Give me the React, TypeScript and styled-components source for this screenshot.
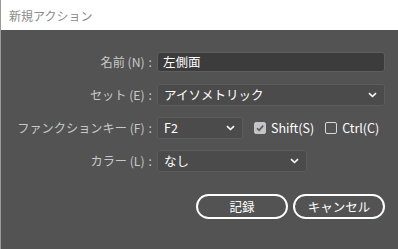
import React from 'react';
import styled, { createGlobalStyle } from 'styled-components';

const GlobalStyle = createGlobalStyle`
  html, body {
    margin: 0;
    padding: 0;
    background: #535353;
  }
  body {
    font-family: "Noto Sans CJK JP", "Noto Sans", sans-serif;
  }
`;

const Dialog = styled.div`
  width: 398px;
  height: 249px;
  box-sizing: border-box;
  border-left: 1px solid #9a9a9a;
  display: flex;
  flex-direction: column;
  background: #535353;
  overflow: hidden;
`;

const TitleBar = styled.div`
  height: 30px;
  flex: none;
  background: #ffffff;
  color: #8a8a8a;
  font-size: 12px;
  display: flex;
  align-items: center;
  padding-left: 8px;
`;

const Form = styled.div`
  display: grid;
  grid-template-columns: 151px 1fr;
  grid-auto-rows: 33px;
  column-gap: 5px;
  padding: 15px 13px 0 0;
  align-items: center;
`;

const Label = styled.label`
  color: #c9c9c9;
  font-size: 12.2px;
  text-align: right;
  white-space: nowrap;
`;

const Colon = styled.span`
  margin-left: 4px;
`;

const Field = styled.div`
  display: flex;
  align-items: center;
  gap: 11px;
`;

const TextInput = styled.div`
  height: 20px;
  flex: 1;
  box-sizing: border-box;
  background: #3c3c3c;
  border: 1px solid #5e5e5e;
  border-radius: 3px;
  color: #ffffff;
  font-size: 12.5px;
  display: flex;
  align-items: center;
  padding-left: 5px;
`;

const Select = styled.div<{ $width?: number }>`
  height: 22px;
  ${(p) => (p.$width ? `width: ${p.$width}px;` : 'flex: 1;')}
  box-sizing: border-box;
  background: #4b4b4b;
  border: 1px solid #5c5c5c;
  border-radius: 3px;
  color: #ffffff;
  font-size: 12.5px;
  display: flex;
  align-items: center;
  justify-content: space-between;
  padding: 0 7px 0 6px;
`;

const Check = styled.div`
  display: flex;
  align-items: center;
  gap: 5px;
  color: #ffffff;
  font-size: 12.5px;
`;

const Box = styled.span<{ $checked?: boolean }>`
  width: 12px;
  height: 12px;
  box-sizing: border-box;
  border-radius: 2px;
  display: inline-flex;
  align-items: center;
  justify-content: center;
  background: ${(p) => (p.$checked ? '#c4c4c4' : 'transparent')};
  border: 1px solid ${(p) => (p.$checked ? '#c4c4c4' : '#d8d8d8')};
`;

const Buttons = styled.div`
  display: flex;
  justify-content: flex-end;
  gap: 5px;
  padding: 17px 13px 0 0;
`;

const Button = styled.button`
  width: 92px;
  height: 25px;
  box-sizing: border-box;
  border: 2px solid #ffffff;
  border-radius: 13px;
  background: transparent;
  color: #ffffff;
  font-family: "Noto Sans CJK JP", "Noto Sans", sans-serif;
  font-size: 12.5px;
  padding: 0;
`;

const Chevron = () => (
  <svg width="9" height="6" viewBox="0 0 9 6">
    <path d="M1 1.2 L4.5 4.5 L8 1.2" stroke="#ffffff" strokeWidth="1.6" fill="none" />
  </svg>
);

const Tick = () => (
  <svg width="10" height="10" viewBox="0 0 10 10">
    <path d="M2 5.2 L4.1 7.3 L8.2 2.6" stroke="#5a5a5a" strokeWidth="1.6" fill="none" />
  </svg>
);

export default function App() {
  return (
    <>
      <GlobalStyle />
      <Dialog>
        <TitleBar>新規アクション</TitleBar>
        <Form>
          <Label>
            名前 (N)<Colon>:</Colon>
          </Label>
          <Field>
            <TextInput>左側面</TextInput>
          </Field>

          <Label>
            セット (E)<Colon>:</Colon>
          </Label>
          <Field>
            <Select>
              アイソメトリック
              <Chevron />
            </Select>
          </Field>

          <Label>
            ファンクションキー (F)<Colon>:</Colon>
          </Label>
          <Field>
            <Select $width={86}>
              F2
              <Chevron />
            </Select>
            <Check>
              <Box $checked>
                <Tick />
              </Box>
              Shift(S)
            </Check>
            <Check>
              <Box />
              Ctrl(C)
            </Check>
          </Field>

          <Label>
            カラー (L)<Colon>:</Colon>
          </Label>
          <Field>
            <Select $width={150}>
              なし
              <Chevron />
            </Select>
          </Field>
        </Form>
        <Buttons>
          <Button>記録</Button>
          <Button>キャンセル</Button>
        </Buttons>
      </Dialog>
    </>
  );
}
